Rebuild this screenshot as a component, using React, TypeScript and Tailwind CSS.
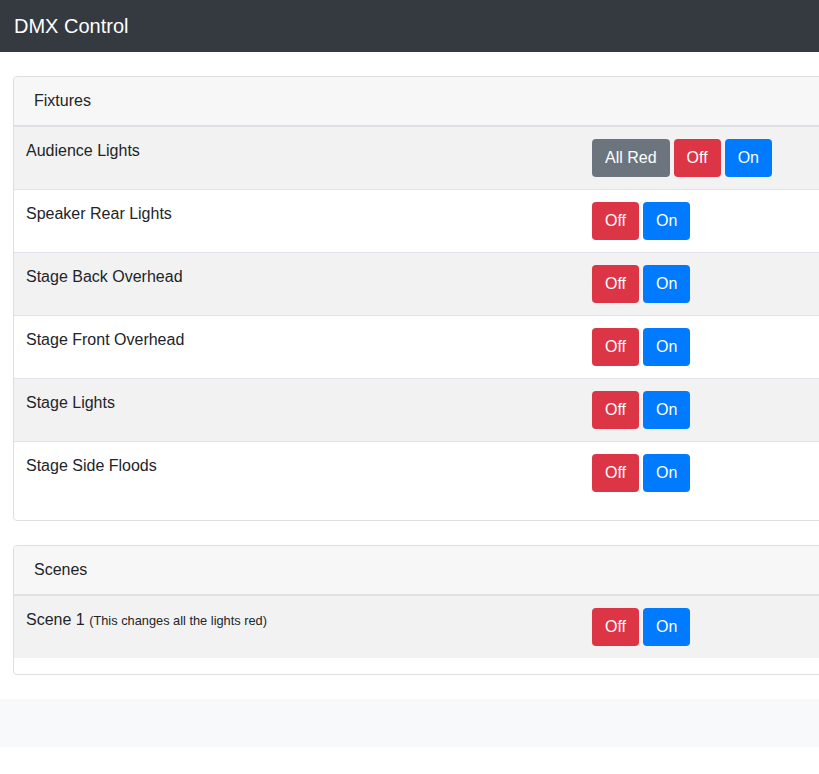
import React from 'react'

const fixtures = [
  { name: 'Audience Lights', allRed: true },
  { name: 'Speaker Rear Lights' },
  { name: 'Stage Back Overhead' },
  { name: 'Stage Front Overhead' },
  { name: 'Stage Lights' },
  { name: 'Stage Side Floods' },
]

function Btn({ kind, children }: { kind: 'secondary' | 'danger' | 'primary'; children: React.ReactNode }) {
  const color =
    kind === 'secondary' ? 'bg-[#6c757d]' : kind === 'danger' ? 'bg-[#dc3545]' : 'bg-[#007bff]'
  return (
    <button className={`${color} text-white text-[16px] leading-[24px] px-3 py-[6px] rounded-[4px] border border-transparent`}>
      {children}
    </button>
  )
}

function Row({ striped, label, allRed }: { striped: boolean; label: React.ReactNode; allRed?: boolean }) {
  return (
    <div className={`grid grid-cols-[566px_1fr] border-t border-[#dee2e6] ${striped ? 'bg-[#f2f2f2]' : 'bg-white'}`}>
      <div className="p-3 leading-[24px]">{label}</div>
      <div className="p-3 flex gap-1 h-[62px]">
        {allRed && <Btn kind="secondary">All Red</Btn>}
        <Btn kind="danger">Off</Btn>
        <Btn kind="primary">On</Btn>
      </div>
    </div>
  )
}

function Card({ title, children }: { title: string; children: React.ReactNode }) {
  return (
    <div className="w-[860px] border border-[#dfdfdf] rounded-[4px] bg-white">
      <div className="bg-[#f7f7f7] border-b border-[#dfdfdf] px-5 py-3 leading-[24px] rounded-t-[4px]">
        {title}
      </div>
      <div className="mb-4">{children}</div>
    </div>
  )
}

export default function App() {
  return (
    <div className="w-[819px] overflow-hidden min-h-[774px] bg-white text-[#212529] text-[16px]" style={{ fontFamily: '"Liberation Sans", Arial, sans-serif' }}>
      <nav className="bg-[#343a40] h-[52px] flex items-center px-[14px]">
        <span className="text-white text-[20px]">DMX Control</span>
      </nav>
      <div className="pl-[13px] pt-6 flex flex-col gap-6">
        <Card title="Fixtures">
          {fixtures.map((f, i) => (
            <Row key={f.name} striped={i % 2 === 0} label={f.name} allRed={f.allRed} />
          ))}
        </Card>
        <Card title="Scenes">
          <Row
            striped
            label={
              <>
                Scene 1 <small className="text-[12.8px]">(This changes all the lights red)</small>
              </>
            }
          />
        </Card>
      </div>
      <div className="mt-6 h-12 bg-[#f8f9fa]" />
    </div>
  )
}
